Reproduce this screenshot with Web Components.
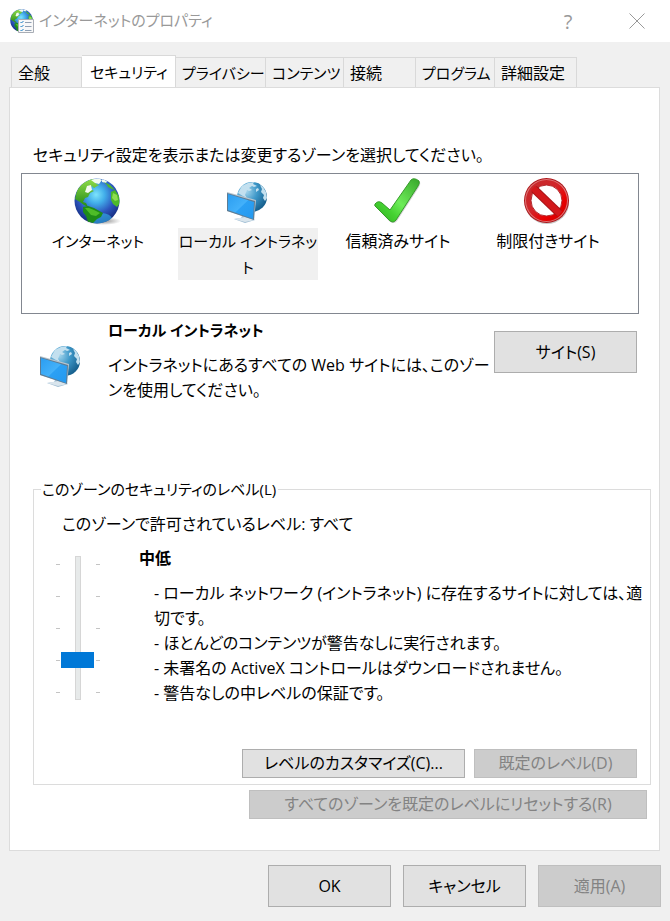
<!DOCTYPE html>
<html lang="ja">
<head>
<meta charset="utf-8">
<meta name="viewport" content="width=device-width, initial-scale=1">
<title>インターネットのプロパティ</title>
<style>
  body {
    margin: 0;
    background: #f0f0f0;
    color: #000;
    font: 16px/25px "Open Sans", "Noto Sans CJK JP", sans-serif;
    font-feature-settings: "palt";
  }
  .kana { font-size: 15px; }
</style>
</head>
<body>
<property-window caption="インターネットのプロパティ">
  <tab-strip slot="tabs">
    <tab-item style="--basis: 71px">全般</tab-item>
    <tab-item class="kana" style="--basis: 94px" selected>セキュリティ</tab-item>
    <tab-item class="kana" style="--basis: 90px">プライバシー</tab-item>
    <tab-item class="kana" style="--basis: 78px">コンテンツ</tab-item>
    <tab-item style="--basis: 72px">接続</tab-item>
    <tab-item class="kana" style="--basis: 79px">プログラム</tab-item>
    <tab-item style="--basis: 82px">詳細設定</tab-item>
  </tab-strip>

  <zone-list label="セキュリティ設定を表示または変更するゾーンを選択してください。">
    <zone-item class="kana" icon="internet">インターネット</zone-item>
    <zone-item class="kana" icon="intranet" selected>ローカル イントラネッ<br>ト</zone-item>
    <zone-item icon="trusted">信頼済みサイト</zone-item>
    <zone-item icon="restricted">制限付きサイト</zone-item>
  </zone-list>

  <zone-detail icon="intranet">
    <span slot="name" class="kana">ローカル イントラネット</span>
    イントラネットにあるすべての Web サイトには、このゾー<br>ンを使用してください。
    <dialog-button slot="action" size="large" style="--width: 143px">サイト(S)</dialog-button>
  </zone-detail>

  <group-box label="このゾーンのセキュリティのレベル(L)">
    <level-picker value="2">
      <span slot="allowed">このゾーンで許可されているレベル: すべて</span>
      <span slot="name">中低</span>
      <span slot="notes">- ローカル ネットワーク (イントラネット) に存在するサイトに対しては、適<br>切です。<br>- ほとんどのコンテンツが警告なしに実行されます。<br>- 未署名の ActiveX コントロールはダウンロードされません。<br>- 警告なしの中レベルの保証です。</span>
    </level-picker>
    <dialog-button slot="actions" style="--width: 223px">レベルのカスタマイズ(C)...</dialog-button>
    <dialog-button slot="actions" style="--width: 163px" disabled>既定のレベル(D)</dialog-button>
  </group-box>

  <dialog-button slot="reset" style="--width: 398px" disabled>すべてのゾーンを既定のレベルにリセットする(R)</dialog-button>

  <dialog-button slot="footer" size="large">OK</dialog-button>
  <dialog-button slot="footer" size="large">キャンセル</dialog-button>
  <dialog-button slot="footer" size="large" disabled>適用(A)</dialog-button>
</property-window>

<script>
const GLOBE = `
  <radialGradient id="sea" cx=".48" cy=".36" r=".64">
    <stop offset="0" stop-color="#7de4fb"/>
    <stop offset=".3" stop-color="#42aeea"/>
    <stop offset=".65" stop-color="#2c55bd"/>
    <stop offset="1" stop-color="#142a7c"/>
  </radialGradient>
  <linearGradient id="land" x2="0" y2="1">
    <stop offset="0" stop-color="#8fdc4a"/>
    <stop offset="1" stop-color="#238a16"/>
  </linearGradient>
  <radialGradient id="shade">
    <stop offset="0" stop-color="#000" stop-opacity=".45"/>
    <stop offset="1" stop-color="#000" stop-opacity="0"/>
  </radialGradient>
  <clipPath id="ball"><circle cx="23" cy="23" r="22.5"/></clipPath>
  <ellipse cx="29" cy="43" rx="18" ry="4" fill="url(#shade)"/>
  <circle cx="23" cy="23" r="22.5" fill="url(#sea)"/>
  <g clip-path="url(#ball)">
    <ellipse cx="27" cy="41" rx="11" ry="6" fill="#37b5ed" opacity=".6"/>
    <path fill="url(#land)" d="M1 21 3 12 9 5 17 1 24 2 22 6 25 7 20 10 18 8 16 11 20 13 16 15 14 19 11 20 9 24 12 25 14 29 10 27 6 24Z"/>
    <path fill="#f2faf0" d="M17 2 24 0 28 2 25 6 21 5ZM13 8 17 7 18 12 14 15 11 14ZM28 1 33 3 32 5 28 4Z"/>
    <path fill="#4cb82b" d="M30 4 36 7 41 12 38 11 34 9 33 7ZM37 14 41 12 45 18 46 25 43 29 39 26 37 22Z"/>
    <path fill="#8edc52" d="M39 15 43 17 44 22 41 23 38 20Z"/>
    <path fill="#1e8c18" d="M9 29 14 28 20 30 29 35 27 39 23 41 19 45 14 44 12 38 9 34Z"/>
    <path fill="#4ebc28" d="M11 30 15 30 20 32 26 35 22 38 17 37Z"/>
  </g>`;

const ICONS = {
  internet: GLOBE,
  intranet: `
    <radialGradient id="globe" cx=".3" cy=".3" r=".75">
      <stop offset="0" stop-color="#a9d8ee"/>
      <stop offset=".5" stop-color="#3e98c9"/>
      <stop offset="1" stop-color="#17618f"/>
    </radialGradient>
    <linearGradient id="screen" x2="1" y2="1">
      <stop offset="0" stop-color="#2b9df0"/>
      <stop offset=".5" stop-color="#43b1fa"/>
      <stop offset=".52" stop-color="#2ba0f4"/>
      <stop offset="1" stop-color="#2499ef"/>
    </linearGradient>
    <circle cx="28" cy="19" r="15" fill="url(#globe)"/>
    <path fill="#c3e0ef" d="M14 15 18 8 24 5 30 4 29 6 33 8 30 9 28 8 25 10 28 12 25 13 23 12 21 17 23 20 19 18ZM36 7 39 9 42 14 43 20 41 23 39 20 40 17 37 14 38 11ZM32 11 34 10 35 12 32 14Z"/>
    <path fill="#9fbdd3" d="M19 36 24 38 31 42 21 45 10 41 17 40Z"/>
    <path fill="#d9e5ed" d="M10 41 21 39 31 42 21 44Z"/>
    <path fill="#b9c5cf" d="M3 14 32 22 30 42 3 33Z"/>
    <path fill="#5d7c94" d="M3 15 31 23 30 42 3 33Z"/>
    <path fill="url(#screen)" d="M4 16 30 24 29 41 4 32Z"/>`,
  trusted: `
    <linearGradient id="tick" x1="1" y1="0" x2="0" y2="1">
      <stop offset="0" stop-color="#37a62b"/>
      <stop offset=".5" stop-color="#6dec58"/>
      <stop offset=".7" stop-color="#45d232"/>
      <stop offset="1" stop-color="#2eab1e"/>
    </linearGradient>
    <path d="M2 27Q5 23 9 26L17 33 38 3Q41 0 46 4 47 6 45 9L23 43Q20 47 15 43L3 30Q1 29 2 27Z" fill="#777" opacity=".35"/>
    <path d="M1 26Q4 22 8 25L16 32 37 2Q40-1 45 3 46 5 44 8L22 42Q19 46 15 42L2 29Q0 28 1 26Z" fill="url(#tick)" stroke="#369b2a"/>`,
  restricted: `
    <linearGradient id="red" x2="1" y2="1">
      <stop offset="0" stop-color="#c22d30"/>
      <stop offset=".45" stop-color="#d32428"/>
      <stop offset=".7" stop-color="#e90000"/>
      <stop offset="1" stop-color="#c90000"/>
    </linearGradient>
    <ellipse cx="23" cy="25" rx="22" ry="21" fill="#777" opacity=".4"/>
    <circle cx="22.5" cy="22.5" r="22.5" fill="#ad171b"/>
    <circle cx="22.5" cy="22.5" r="21.5" fill="#e07575"/>
    <circle cx="22.5" cy="22.5" r="20.5" fill="url(#red)"/>
    <circle cx="22.5" cy="22.5" r="15.5" fill="#fff" stroke="#b3262a"/>
    <path d="M10 11 35 35" stroke="#a91518" stroke-width="8"/>
    <path d="M9 10 36 36" stroke="#d3181b" stroke-width="6"/>`,
  options: `
    ${GLOBE}
    <path fill="#f8f8f8" stroke="#a8adb5" stroke-width="2" d="M17 21H47V47H17Z"/>
    <path fill="none" stroke="#2184c9" stroke-width="2" d="m21 26 2 2 4-4M21 34l2 2 4-4M21 42l2 2 4-4"/>
    <path stroke="#8f9fb3" stroke-width="2" d="M30 27H43M30 35H43M30 43H43"/>`
};

function attach(element, html) {
  const template = document.createElement('template');
  template.innerHTML = html;
  element.attachShadow({mode: 'open'}).appendChild(template.content.cloneNode(true));
}

class ZoneIcon extends HTMLElement {
  constructor() {
    super();
    attach(this, `
      <style>
        :host { display: block; flex: none; width: 48px; height: 48px; }
        svg { display: block; width: 100%; height: 100%; overflow: visible; }
      </style>
      <svg viewBox="0 0 48 48" aria-hidden="true">${ICONS[this.getAttribute('kind')]}</svg>
    `);
  }
}

class DialogButton extends HTMLElement {
  constructor() {
    super();
    attach(this, `
      <style>
        :host { display: block; width: var(--width, 123px); }
        button {
          display: block;
          box-sizing: border-box;
          width: 100%;
          height: 29px;
          padding: 0;
          border: 1px solid #adadad;
          background: #e1e1e1;
          color: #000;
          font: inherit;
          font-feature-settings: inherit;
          white-space: nowrap;
        }
        :host([size=large]) button { height: 42px; }
        button:disabled { background: #ccc; border-color: #bfbfbf; color: #838383; }
      </style>
      <button type="button"><slot></slot></button>
    `);
    this.shadowRoot.querySelector('button').disabled = this.hasAttribute('disabled');
  }
}

class TabItem extends HTMLElement {
  constructor() {
    super();
    attach(this, `
      <style>
        :host { display: block; width: var(--basis); }
        button {
          display: block;
          box-sizing: border-box;
          width: 100%;
          height: 30px;
          padding: 1px 0 0 6px;
          border: 1px solid #d9d9d9;
          border-width: 1px 1px 0 0;
          background: #f0f0f0;
          color: inherit;
          font: inherit;
          font-feature-settings: inherit;
          text-align: left;
          white-space: nowrap;
        }
        :host(:first-child) button { border-left-width: 1px; }
        :host([selected]) button {
          height: 33px;
          margin-bottom: -1px;
          padding: 0 0 0 8px;
          background: #fff;
        }
      </style>
      <button type="button" role="tab"><slot></slot></button>
    `);
    this.shadowRoot.querySelector('button')
        .setAttribute('aria-selected', this.hasAttribute('selected'));
  }
}

class TabStrip extends HTMLElement {
  constructor() {
    super();
    attach(this, `
      <style>
        :host { display: block; }
        div { display: flex; align-items: flex-end; }
      </style>
      <div role="tablist"><slot></slot></div>
    `);
  }
}

class ZoneItem extends HTMLElement {
  constructor() {
    super();
    attach(this, `
      <style>
        :host { display: block; }
        button {
          display: flex;
          flex-direction: column;
          align-items: center;
          width: 100%;
          padding: 4px 5px 0;
          border: 0;
          background: none;
          color: inherit;
          font: inherit;
          line-height: 26px;
          font-feature-settings: inherit;
        }
        zone-icon { margin-bottom: 2px; }
        span { align-self: stretch; white-space: nowrap; }
        :host([selected]) span { background: #f0f0f0; }
      </style>
      <button type="button" role="option">
        <zone-icon kind="${this.getAttribute('icon')}"></zone-icon>
        <span><slot></slot></span>
      </button>
    `);
    this.shadowRoot.querySelector('button')
        .setAttribute('aria-selected', this.hasAttribute('selected'));
  }
}

class ZoneList extends HTMLElement {
  constructor() {
    super();
    attach(this, `
      <style>
        :host { display: block; padding: 55px 20px 0 11px; }
        p { margin: 0 0 5px 12px; }
        div {
          display: grid;
          grid-template-columns: repeat(4, 150px);
          align-items: start;
          box-sizing: border-box;
          min-height: 141px;
          padding-left: 1px;
          border: 1px solid #828790;
        }
      </style>
      <p id="label">${this.getAttribute('label')}</p>
      <div role="listbox" aria-labelledby="label"><slot></slot></div>
    `);
  }
}

class ZoneDetail extends HTMLElement {
  constructor() {
    super();
    attach(this, `
      <style>
        :host {
          display: flex;
          box-sizing: border-box;
          min-height: 163px;
          padding: 4px 22px 0 27px;
        }
        zone-icon { margin-top: 24px; }
        .text { flex: 1; margin-left: 23px; white-space: nowrap; }
        h2 { margin: 0 0 10px; font-size: inherit; }
        p { margin: 0; }
        ::slotted(dialog-button) { margin-top: 13px; }
      </style>
      <zone-icon kind="${this.getAttribute('icon')}"></zone-icon>
      <div class="text">
        <h2><slot name="name"></slot></h2>
        <p><slot></slot></p>
      </div>
      <slot name="action"></slot>
    `);
  }
}

class GroupBox extends HTMLElement {
  constructor() {
    super();
    attach(this, `
      <style>
        :host { display: block; padding: 0 8px 0 23px; }
        fieldset {
          min-width: 0;
          margin: 0;
          padding: 10px 13px 6px 7px;
          border: 1px solid #dcdcdc;
        }
        legend { padding: 0 2px 0 1px; font-size: 15px; }
        .actions { display: flex; justify-content: flex-end; gap: 9px; margin-top: 43px; }
      </style>
      <fieldset>
        <legend>${this.getAttribute('label')}</legend>
        <slot></slot>
        <div class="actions"><slot name="actions"></slot></div>
      </fieldset>
    `);
  }
}

class LevelPicker extends HTMLElement {
  constructor() {
    super();
    attach(this, `
      <style>
        :host { display: block; padding-left: 15px; }
        label { display: block; margin-left: 6px; }
        .row { display: flex; margin-top: 9px; }
        .slider { display: flex; margin-top: 10px; height: 144px; }
        .ticks {
          width: 4px;
          margin-top: 8px;
          height: 129px;
          background: repeating-linear-gradient(#c4c4c4 0 1px, transparent 1px 32px);
        }
        input {
          appearance: none;
          writing-mode: vertical-lr;
          direction: rtl;
          width: 33px;
          height: 144px;
          margin: 0 2px 0 1px;
          background:
            linear-gradient(#e7eaea, #e7eaea) center / 4px calc(100% - 2px) no-repeat,
            linear-gradient(#d6d6d6, #d6d6d6) center / 6px 100% no-repeat;
        }
        input::-webkit-slider-thumb {
          appearance: none;
          width: 33px;
          height: 16px;
          background: #0078d7;
        }
        .text { margin-left: 39px; white-space: nowrap; }
        h3 { margin: 0 0 10px; font-size: inherit; }
        p { margin: 0 0 0 15px; }
      </style>
      <label for="level"><slot name="allowed"></slot></label>
      <div class="row">
        <div class="slider">
          <div class="ticks"></div>
          <input id="level" type="range" min="1" max="5" value="${this.getAttribute('value')}">
          <div class="ticks"></div>
        </div>
        <div class="text">
          <h3><slot name="name"></slot></h3>
          <p><slot name="notes"></slot></p>
        </div>
      </div>
    `);
  }
}

class PropertyWindow extends HTMLElement {
  constructor() {
    super();
    attach(this, `
      <style>
        :host { display: flex; flex-direction: column; min-height: 100vh; }
        header {
          display: flex;
          align-items: center;
          box-sizing: border-box;
          height: 42px;
          padding: 0 10px;
          background: #fff;
          color: #999;
        }
        zone-icon { width: 24px; height: 24px; }
        h1 { flex: 1; margin: 0 0 2px 5px; font-size: 15px; font-weight: normal; }
        header button {
          display: grid;
          place-items: center;
          width: 92px;
          height: 38px;
          padding: 0;
          border: 0;
          background: none;
          color: inherit;
          font: inherit;
          font-size: 20px;
        }
        header button:last-child { width: 46px; }
        header svg { width: 16px; height: 16px; stroke: #999; }
        nav { margin: 13px 10px 0 11px; }
        main {
          flex: 1;
          margin: 0 10px 0 9px;
          border: 1px solid #dcdcdc;
          background: #fff;
        }
        .reset { display: flex; justify-content: flex-end; padding: 5px 12px 0 0; }
        footer { display: flex; justify-content: flex-end; gap: 12px; padding: 14px 9px; }
      </style>
      <header>
        <zone-icon kind="options"></zone-icon>
        <h1>${this.getAttribute('caption')}</h1>
        <button type="button" aria-label="ヘルプ">?</button>
        <button type="button" aria-label="閉じる">
          <svg viewBox="0 0 16 16"><path d="M.5.5l15 15M15.5.5l-15 15"/></svg>
        </button>
      </header>
      <nav><slot name="tabs"></slot></nav>
      <main>
        <slot></slot>
        <div class="reset"><slot name="reset"></slot></div>
      </main>
      <footer><slot name="footer"></slot></footer>
    `);
  }
}

customElements.define('zone-icon', ZoneIcon);
customElements.define('dialog-button', DialogButton);
customElements.define('tab-item', TabItem);
customElements.define('tab-strip', TabStrip);
customElements.define('zone-item', ZoneItem);
customElements.define('zone-list', ZoneList);
customElements.define('zone-detail', ZoneDetail);
customElements.define('group-box', GroupBox);
customElements.define('level-picker', LevelPicker);
customElements.define('property-window', PropertyWindow);
</script>
</body>
</html>
